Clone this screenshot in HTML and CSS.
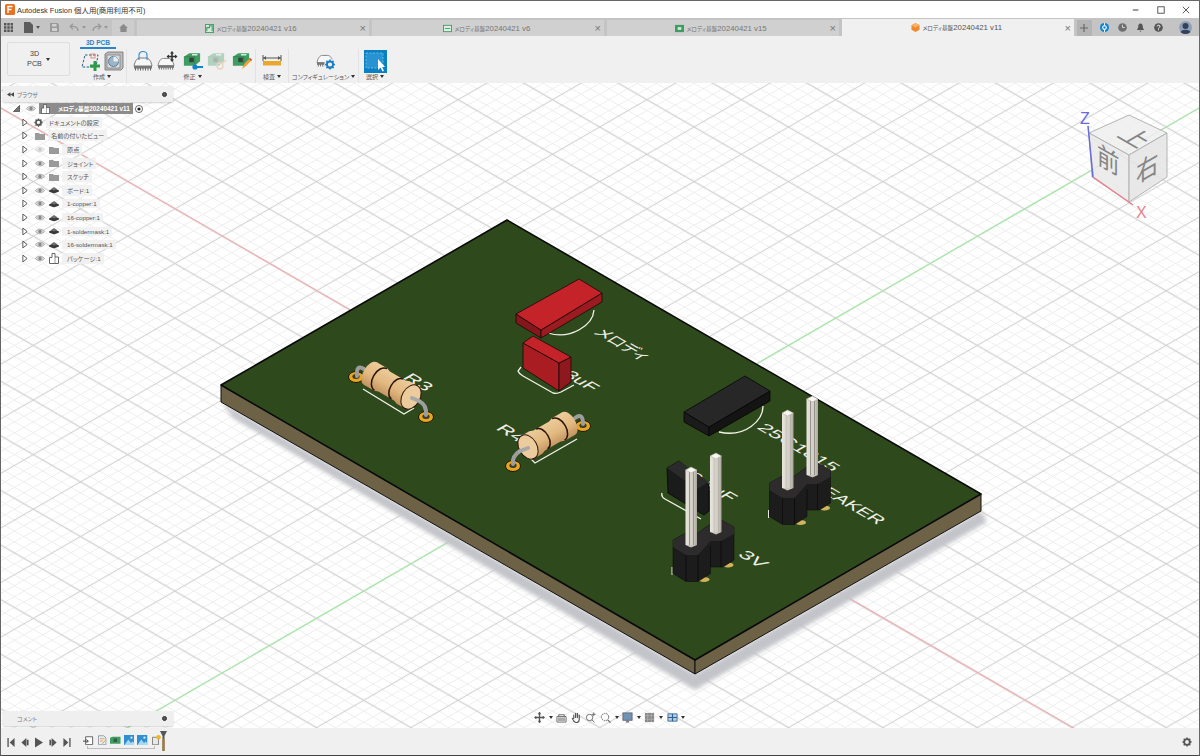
FILE: index.html
```html
<!DOCTYPE html>
<html lang="ja">
<head>
<meta charset="utf-8">
<title>Autodesk Fusion</title>
<link rel="stylesheet" href="styles.css">
</head>
<body>
<svg class="defs" width="0" height="0" aria-hidden="true">
  <defs>
    <symbol id="eye" viewBox="0 0 10 7"><path d="M0.5 3.5C2.5 0.5 7.5 0.5 9.5 3.5C7.5 6.5 2.5 6.5 0.5 3.5Z" fill="#d8d8d8" stroke="#9a9a9a" stroke-width=".8"/><circle cx="5" cy="3.5" r="1.7" fill="#8a8a8a"/></symbol>
    <symbol id="folder" viewBox="0 0 10 8"><path d="M0 1H4L5 2H10V8H0Z" fill="#9a9a9a"/></symbol>
    <symbol id="body" viewBox="0 0 10 7"><path d="M0 4L5 1.500L10 4V5L5 7L0 5Z" fill="#3a3a3a"/><path d="M2 2.500L5 0.500L8 2.500L5 4Z" fill="#707070"/></symbol>
    <symbol id="pack" viewBox="0 0 10 11"><path d="M3 .5H6V4H9.500V10.500H.5V4.500H3Z" fill="#fff" stroke="#555" stroke-width=".9"/><path d="M6 4V10" stroke="#555" stroke-width=".6"/></symbol>
    <symbol id="tri" viewBox="0 0 7 10"><path d="M1 1L6 5L1 9Z" fill="#fff" stroke="#444" stroke-width="1"/></symbol>
    <symbol id="chip" viewBox="0 0 20 18"><path d="M1 13C2 8 4 5 7 5H13C16 5 18 8 19 13Z" fill="#f7f7f7" stroke="#7a7a7a" stroke-width="1"/><rect x="1" y="13" width="18" height="2.500" fill="#777"/><path d="M2.500 15v2.500M5 15v2.500M7.500 15v2.500M10 15v2.500M12.500 15v2.500M15 15v2.500M17.500 15v2.500" stroke="#666" stroke-width="1"/></symbol>
    <symbol id="pcb" viewBox="0 0 20 16"><path d="M1 5L7 1H19V10L13 15H1Z" fill="#3f9d63"/><path d="M1 5H13V15" fill="none" stroke="#2f7a4a" stroke-width=".8"/><rect x="7" y="6" width="5" height="5" fill="#33423a"/><rect x="10" y="2" width="6" height="1.500" fill="#e7f3ea"/></symbol>
    <symbol id="gear" viewBox="0 0 12 12"><circle cx="6" cy="6" r="3.400" fill="none" stroke="currentColor" stroke-width="2.200"/><path d="M6 .5V2.500M6 9.500V11.500M.5 6H2.500M9.500 6H11.500M2.100 2.100L3.500 3.500M8.500 8.500L9.900 9.900M2.100 9.900L3.500 8.500M8.500 3.500L9.900 2.100" stroke="currentColor" stroke-width="1.700"/></symbol>
    <symbol id="doc" viewBox="0 0 12 14"><path d="M1 1H8L11 4V13H1Z" fill="#e8eef4" stroke="#7b8794" stroke-width="1"/></symbol>
    <symbol id="pic" viewBox="0 0 12 12"><rect width="12" height="12" fill="#2f8fd0"/><path d="M0 12L5 5L8 9L10 7L12 10V12Z" fill="#a9d8f4"/><circle cx="8.500" cy="3" r="1.300" fill="#d5eefc"/></symbol>
  </defs>
</svg>

<div class="window">
  <header class="titlebar">
    <svg class="app-icon" viewBox="0 0 10 11"><rect width="10" height="11" rx="1.500" fill="#e8701f"/><path d="M3 9V2.500H7.500M3 5.500H6.500" fill="none" stroke="#fff" stroke-width="1.400"/></svg>
    <span class="app-title">Autodesk Fusion 個人用(商用利用不可)</span>
    <div class="win-controls">
      <svg class="win-btn" viewBox="0 0 10 10"><path d="M1 5H8" stroke="#333" stroke-width="1.200"/></svg>
      <svg class="win-btn" viewBox="0 0 10 10"><rect x="1" y="1" width="8" height="8" fill="none" stroke="#333" stroke-width="1"/></svg>
      <svg class="win-btn" viewBox="0 0 10 10"><path d="M1 1L9 9M9 1L1 9" stroke="#333" stroke-width="1"/></svg>
    </div>
  </header>

  <nav class="tabbar">
    <div class="quick">
      <svg class="q-grid" viewBox="0 0 9 9"><path d="M0 0h2.400v2.400H0zM3.300 0h2.400v2.400H3.300zM6.600 0H9v2.400H6.600zM0 3.300h2.400v2.400H0zM3.300 3.300h2.400v2.400H3.300zM6.600 3.300H9v2.400H6.600zM0 6.600h2.400V9H0zM3.300 6.600h2.400V9H3.300zM6.600 6.600H9V9H6.600z" fill="#555"/></svg>
      <svg class="q-file" viewBox="0 0 9 11"><path d="M0 0H6L9 3V11H0Z" fill="#5c5c5c"/></svg>
      <span class="caret q-c1"></span>
      <svg class="q-save" viewBox="0 0 9 9"><path d="M0 0H7.500L9 1.500V9H0Z" fill="#9a9a9a"/><rect x="2" y="1" width="4.500" height="2.500" fill="#d0d0d0"/><rect x="2" y="5" width="5" height="3" fill="#d0d0d0"/></svg>
      <svg class="q-undo" viewBox="0 0 10 9"><path d="M9 8C9 4 6 3 2 3.500M4 .8L1.200 3.500L4 6.200" fill="none" stroke="#9a9a9a" stroke-width="1.400"/></svg>
      <span class="caret light q-c2"></span>
      <svg class="q-redo" viewBox="0 0 10 9"><path d="M1 8C1 4 4 3 8 3.500M6 .8L8.800 3.500L6 6.200" fill="none" stroke="#9a9a9a" stroke-width="1.400"/></svg>
      <span class="caret light q-c3"></span>
    </div>
    <div class="home-tab"><svg viewBox="0 0 10 9"><path d="M5 0L10 4.500H8.500V9H1.500V4.500H0Z" fill="#8b8b8b"/></svg></div>
    <div class="tab">
      <svg class="tab-icon" viewBox="0 0 10 10"><rect x=".5" y=".5" width="9" height="9" fill="#d5eadb" stroke="#3f9d63"/><path d="M2 8V4H5V2H8V8" fill="none" stroke="#3f9d63" stroke-width="1.200"/></svg>
      <span class="tab-text"><span class="ja">メロディ基盤</span>20240421 v16</span><span class="tab-close">×</span>
    </div>
    <div class="tab second">
      <svg class="tab-icon" viewBox="0 0 10 10"><rect x=".5" y="1.500" width="9" height="7" fill="#dcefe2" stroke="#3f9d63"/><path d="M2 5H8" stroke="#3f9d63"/></svg>
      <span class="tab-text"><span class="ja">メロディ基盤</span>20240421 v6</span><span class="tab-close">×</span>
    </div>
    <div class="tab">
      <svg class="tab-icon" viewBox="0 0 10 10"><rect y="1" width="10" height="8" fill="#3f9d63"/><rect x="3" y="3.500" width="4" height="3" fill="#d5eadb"/></svg>
      <span class="tab-text"><span class="ja">メロディ基盤</span>20240421 v15</span><span class="tab-close">×</span>
    </div>
    <div class="tab active">
      <svg class="tab-icon" viewBox="0 0 10 10"><path d="M5 0L9.500 2.500V7.500L5 10L.5 7.500V2.500Z" fill="#ef8a2c"/><path d="M.5 2.500L5 5L9.500 2.500L5 0Z" fill="#f7b267"/></svg>
      <span class="tab-text"><span class="ja">メロディ基盤</span>20240421 v11</span><span class="tab-close">×</span>
    </div>
    <div class="new-tab"><svg viewBox="0 0 9 9"><path d="M4.500 0V9M0 4.500H9" stroke="#666" stroke-width="1.300"/></svg></div>
    <div class="status-icons">
      <svg class="st" viewBox="0 0 10 10"><circle cx="5" cy="5" r="5" fill="#0c84d0"/><circle cx="5" cy="5" r="2" fill="none" stroke="#fff" stroke-width="1.200"/><path d="M5 0V3M5 7V10" stroke="#fff"/></svg>
      <svg class="st" viewBox="0 0 10 10"><circle cx="5" cy="5" r="4.800" fill="#6f6f6f"/><path d="M5 2V5H7.500" fill="none" stroke="#ddd" stroke-width="1"/></svg>
      <svg class="st" viewBox="0 0 10 10"><path d="M5 .5C3 .5 2.500 2 2.500 4C2.500 6 1.500 7 1 7.800H9C8.500 7 7.500 6 7.500 4C7.500 2 7 .5 5 .5ZM4 8.500H6L5 10Z" fill="#555"/></svg>
      <svg class="st" viewBox="0 0 10 10"><circle cx="5" cy="5" r="4.800" fill="#555"/><path d="M3.500 3.800C3.500 2 6.700 2 6.700 3.800C6.700 5 5 4.900 5 6.200M5 7V8" fill="none" stroke="#fff" stroke-width="1.100"/></svg>
      <svg class="avatar" viewBox="0 0 13 13"><circle cx="6.500" cy="6.500" r="6.500" fill="#8fa0b8"/><circle cx="6.500" cy="5" r="3" fill="#33425c"/><path d="M1.500 11C3 8 10 8 11.500 11C9 13.700 4 13.700 1.500 11Z" fill="#33425c"/></svg>
    </div>
  </nav>

  <section class="toolbar">
    <div class="mode-btn"><span>3D<br>PCB</span><span class="caret dark"></span></div>
    <div class="pcb-tabs">
      <div class="pcb-label">3D PCB</div>
      <div class="groups">
        <div class="group g-create">
          <div class="tools">
            <svg class="tool" viewBox="0 0 20 20"><path d="M4 4H17L15 16H1Z" fill="none" stroke="#2c5d86" stroke-width="1" stroke-dasharray="2.500 1.500"/><rect x="10" y="3" width="4" height="4" fill="none" stroke="#d77a6e" stroke-width=".8"/><path d="M14 10V20M9 15H19" stroke="#2c9a48" stroke-width="3"/></svg>
            <svg class="tool" viewBox="0 0 20 20"><path d="M1 3L4 1H19V17L17 19H1Z" fill="#bdbdbd" stroke="#6d6d6d" stroke-width=".8"/><rect x="3" y="4" width="13" height="13" fill="#d7dde2" stroke="#777" stroke-width=".7"/><circle cx="9.500" cy="10.500" r="5" fill="#9db5c9" stroke="#5f7c93"/><path d="M9.500 10.500V5.500A5 5 0 0 1 14.500 10.500Z" fill="#e8eef2"/></svg>
          </div>
          <div class="group-label">作成<span class="caret dark"></span></div>
        </div>
        <div class="group g-modify">
          <div class="tools">
            <svg class="tool wide" viewBox="0 0 22 20"><use href="#chip" x="0" y="2" width="20" height="18"/><path d="M6 9V4A4 3.500 0 0 1 14 4V9" fill="none" stroke="#3f8fcf" stroke-width="1.200"/></svg>
            <svg class="tool wide" viewBox="0 0 22 20"><use href="#chip" x="0" y="3" width="18" height="16"/><path d="M15 1V10M10.500 5.500H19.500" stroke="#333" stroke-width="1.600"/><path d="M13 2.500L15 0L17 2.500ZM13 8.500L15 11L17 8.500ZM12 3.500L9.500 5.500L12 7.500ZM18 3.500L20.500 5.500L18 7.500Z" fill="#333"/></svg>
            <svg class="tool wide" viewBox="0 0 22 20"><use href="#pcb" x="1" y="1" width="18" height="15"/><circle cx="13" cy="16" r="2.600" fill="#0c84d0"/><path d="M13 16H21" stroke="#0c84d0" stroke-width="2"/></svg>
            <svg class="tool wide faded" viewBox="0 0 22 20"><use href="#pcb" x="1" y="1" width="18" height="15"/><circle cx="14" cy="15" r="3" fill="none" stroke="#e0a06a" stroke-width="1.400"/><path d="M16 13L20 9" stroke="#e0a06a" stroke-width="1.400"/></svg>
            <svg class="tool wide" viewBox="0 0 22 20"><use href="#pcb" x="1" y="1" width="18" height="15"/><path d="M11 18L13 13L19 7L21 9L15 15Z" fill="#f0a030"/><path d="M19 7L21 9L20 10L18 8Z" fill="#d8483c"/></svg>
          </div>
          <div class="group-label">修正<span class="caret dark"></span></div>
        </div>
        <div class="group g-inspect">
          <div class="tools">
            <svg class="tool" viewBox="0 0 20 20"><path d="M1 4V10M19 4V10M1 7H19" stroke="#555" stroke-width="1"/><path d="M4 5L1.500 7L4 9ZM16 5L18.500 7L16 9Z" fill="#555"/><rect x="1" y="10" width="18" height="4.500" fill="#eba72b"/></svg>
          </div>
          <div class="group-label">検査<span class="caret dark"></span></div>
        </div>
        <div class="group g-config">
          <div class="tools">
            <svg class="tool" viewBox="0 0 20 20"><use href="#chip" x="0" y="0" width="18" height="16"/><circle cx="14" cy="13.500" r="5.800" fill="#f0f0f0"/><use href="#gear" x="8.500" y="8" width="11" height="11" class="gear-blue"/></svg>
          </div>
          <div class="group-label">コンフィギュレーション<span class="caret dark"></span></div>
        </div>
        <div class="group g-select">
          <div class="tools">
            <svg class="tool select" viewBox="0 0 23 23"><rect width="23" height="23" fill="#0a80c4"/><rect x="2" y="3" width="17" height="15" fill="#2793d2" stroke="#7cc4ea" stroke-width=".8" stroke-dasharray="2 1.500"/><path d="M14 9V20L16.500 17.500L18.500 21.500L20 20.700L18 17H21Z" fill="#fff"/></svg>
          </div>
          <div class="group-label">選択<span class="caret dark"></span></div>
        </div>
      </div>
    </div>
  </section>

  <main class="viewport">
    <svg class="scene" viewBox="0 83 1198 645" preserveAspectRatio="none">
      <defs>
        <pattern id="grid" patternUnits="userSpaceOnUse" width="100" height="100" patternTransform="matrix(0.472 0.273 -0.472 0.273 268.3 72.4)">
          <path d="M10 0V100M30 0V100M70 0V100M90 0V100M0 10H100M0 30H100M0 70H100M0 90H100" stroke="#eeeeee" stroke-width="1.900" fill="none"/>
          <path d="M50 0V100M0 50H100" stroke="#d2d2d2" stroke-width="2.300" fill="none"/>
        </pattern>
        <filter id="soft" x="-5%" y="-5%" width="110%" height="110%"><feGaussianBlur stdDeviation="2"/></filter>
        <linearGradient id="tan" x1="0" y1="-13" x2="0" y2="13" gradientUnits="userSpaceOnUse">
          <stop offset="0" stop-color="#edcc9c"/><stop offset=".55" stop-color="#e2b981"/><stop offset="1" stop-color="#c2935f"/>
        </linearGradient>
        <linearGradient id="pinface" x1="0" y1="0" x2="1" y2="0">
          <stop offset="0" stop-color="#e9e6df"/><stop offset=".3" stop-color="#dedad2"/><stop offset=".34" stop-color="#8f8c86"/><stop offset=".4" stop-color="#d6d2ca"/><stop offset=".66" stop-color="#d2cec6"/><stop offset=".7" stop-color="#8f8c86"/><stop offset=".76" stop-color="#c8c4bc"/><stop offset="1" stop-color="#a9a59d"/>
        </linearGradient>
        <g id="resistor">
          <path d="M-47 -13H-35L-31 -11.500H-13L-9 -13H0V13H-9L-13 11.500H-31L-35 13H-47Z" fill="url(#tan)"/>
          <ellipse cx="-47" cy="0" rx="7" ry="13" fill="url(#tan)"/>
          <path d="M-35 -12.500A8 12.500 0 0 0 -35 12.500M-16 -11.500A7 11.500 0 0 0 -16 11.500" fill="none" stroke="#2a1408" stroke-width="1.500"/>
          <ellipse cx="0" cy="0" rx="9" ry="13" fill="#eccb9d" stroke="#2a1408" stroke-width="1"/>
        </g>
        <g id="pad">
          <ellipse cx="0" cy="0" rx="7.500" ry="5.500" fill="#e8a61e" stroke="#1a1408" stroke-width="1"/>
          <ellipse cx="0" cy="-.5" rx="3.600" ry="2.500" fill="#3a3a30"/>
        </g>
        <g id="header">
          <path d="M671 567V575" stroke="#e8e8e0" stroke-width="1"/>
          <ellipse cx="703" cy="579.500" rx="5.500" ry="2.500" fill="#d2b45c"/>
          <ellipse cx="727" cy="565" rx="5.500" ry="2.500" fill="#d2b45c"/>
          <path d="M672 540L685 533L697 533L708 525L720 520L733 527V560L722 567H709.500V573.500L697 581.500H685L672 573.500Z" fill="#1d1c1c" stroke="#0e0e0e" stroke-width=".6"/>
          <path d="M672 540L685 533L697 533L708 525L720 520L733 527V534L720 541L709.500 541L697 555H685L672 547Z" fill="#2d2b2b"/>
          <path d="M685 555V581M697 555V581M709.500 546V567M720 541V567" stroke="#0a0a0a" stroke-width=".8"/>
          <rect x="684.500" y="470" width="11.500" height="75" fill="url(#pinface)"/>
          <path d="M684.500 545L690 547.500L696 545Z" fill="#c8c4bc"/>
          <path d="M684.500 470L690 467L696 470L690 473Z" fill="#f7f5f0" stroke="#a8a49c" stroke-width=".5"/>
          <rect x="709" y="456" width="11.500" height="76" fill="url(#pinface)"/>
          <path d="M709 532L715 534.500L720.500 532Z" fill="#c8c4bc"/>
          <path d="M709 456L715 453L720.500 456L715 459Z" fill="#f7f5f0" stroke="#a8a49c" stroke-width=".5"/>
        </g>
      </defs>

      <rect x="0" y="83" width="1198" height="645" fill="#ffffff"/>
      <rect x="0" y="83" width="1198" height="645" fill="url(#grid)"/>
      <path d="M0 108L1200 801.500" stroke="#f0b0b4" stroke-width="1.200"/>
      <path d="M0 800.800L1385 0" stroke="#a6e8a6" stroke-width="1.200"/>

      <path class="shadow" d="M220 402L232 418L694 690L986 522L980 511L694 674Z" fill="#c3c4c9" filter="url(#soft)"/>

      <path d="M220 385L694 660V674L220 402Z" fill="#6d6146" stroke="#111" stroke-width="1"/>
      <path d="M694 660L980 494V511L694 674Z" fill="#6d6146" stroke="#111" stroke-width="1"/>
      <path d="M220 385L506 220L980 494L694 660Z" fill="#2e4a1d" stroke="#0a0a0a" stroke-width="1.600" stroke-linejoin="round"/>

      <g class="silk" fill="none" stroke="#f2f2ea" stroke-width="1.300">
        <path d="M593 310C592 325 570 340 547 333"/>
        <path d="M520 367L517 371Q518 374 522 376L552 393Q556 394 560 392L573 385"/>
        <path d="M362 389L403 414L413 408"/>
        <path d="M523 452L534 463L576 439"/>
        <path d="M762 406C762 420 745 438 718 432"/>
        <path d="M661 493Q660 497 664 499L700 519"/>
      </g>
      <g class="silk-text">
        <text class="silk-t" transform="matrix(.866 .5 -.866 .5 592 333)" textLength="56" lengthAdjust="spacingAndGlyphs">メロディ</text>
        <text class="silk-t" transform="matrix(.866 .5 -.866 .5 401 378)" textLength="27" lengthAdjust="spacingAndGlyphs">R3</text>
        <text class="silk-t" transform="matrix(.866 .5 -.866 .5 494 429)" textLength="27" lengthAdjust="spacingAndGlyphs">R4</text>
        <text class="silk-t" transform="matrix(.866 .5 -.866 .5 547 367)" textLength="50" lengthAdjust="spacingAndGlyphs">3.3uF</text>
        <text class="silk-t" transform="matrix(.866 .5 -.866 .5 755 428)" textLength="88" lengthAdjust="spacingAndGlyphs">25C1815</text>
        <text class="silk-t" transform="matrix(.866 .5 -.866 .5 685 477)" textLength="50" lengthAdjust="spacingAndGlyphs">0.1uF</text>
        <text class="silk-t" transform="matrix(.866 .5 -.866 .5 797 479)" textLength="92" lengthAdjust="spacingAndGlyphs">SPEAKER</text>
        <text class="silk-t" transform="matrix(.866 .5 -.866 .5 736 555)" textLength="27" lengthAdjust="spacingAndGlyphs">3V</text>
      </g>

      <g class="part-red">
        <path d="M515 314L540 330V338L515 323Z" fill="#84171c" stroke="#1a0606" stroke-width=".8"/>
        <path d="M540 330L601 293V302L540 338Z" fill="#9c1b20" stroke="#1a0606" stroke-width=".8"/>
        <path d="M515 314L578 279L601 293L540 330Z" fill="#c4232a" stroke="#1a0606" stroke-width=".8"/>
        <path d="M522 343L558 363V391L522 368Z" fill="#a81c22" stroke="#1a0606" stroke-width=".8"/>
        <path d="M558 363L570 357V382L558 391Z" fill="#8d181d" stroke="#1a0606" stroke-width=".8"/>
        <path d="M522 343L532 336L570 357L558 363Z" fill="#c4232a" stroke="#1a0606" stroke-width=".8"/>
      </g>

      <g class="part-black">
        <path d="M683 412L708 427V436L683 422Z" fill="#1b1b1b" stroke="#050505" stroke-width=".8"/>
        <path d="M708 427L769 391V401L708 436Z" fill="#141414" stroke="#050505" stroke-width=".8"/>
        <path d="M683 412L744 376L769 391L708 427Z" fill="#272727" stroke="#050505" stroke-width=".8"/>
        <path d="M666 468L667 493L703 515L708 511V485L678 461Z" fill="#1b1b1b" stroke="#050505" stroke-width=".8"/>
        <path d="M666 468L678 461L708 482L696 489Z" fill="#2b2b2b"/>
      </g>

      <use href="#pad" x="355" y="377"/>
      <use href="#pad" x="425" y="417"/>
      <use href="#pad" x="512" y="466"/>
      <use href="#pad" x="582" y="426"/>
      <g class="leads" fill="none" stroke="#9d9d9d" stroke-width="4" stroke-linecap="round">
        <path d="M363 369Q355 364 356 376"/>
        <path d="M411 398L418 401Q426 405 425 415"/>
        <path d="M574 418Q582 412 582 424"/>
        <path d="M527 448L519 451Q511 456 512 464"/>
      </g>
      <use href="#resistor" transform="translate(410 397) rotate(30)"/>
      <use href="#resistor" transform="translate(527 447) scale(-1 1) rotate(30)"/>
      <path class="leads" d="M411 398L418 401" stroke="#a8a8a8" stroke-width="4" stroke-linecap="round"/>
      <path class="leads" d="M527 448L519 451" stroke="#a8a8a8" stroke-width="4" stroke-linecap="round"/>

      <use href="#header"/>
      <use href="#header" x="96.500" y="-57"/>

      <g class="gizmo">
        <path d="M1088 133L1128 115L1166 133L1128 155Z" fill="#efefef" fill-opacity=".85" stroke="#b4b4b4"/>
        <path d="M1088 133L1128 155V202L1091 177Z" fill="#e9e9e9" fill-opacity=".85" stroke="#b4b4b4"/>
        <path d="M1128 155L1166 133V177L1128 202Z" fill="#e4e4e4" fill-opacity=".85" stroke="#b4b4b4"/>
        <text class="cube-t" transform="matrix(.866 .5 -.866 .5 1115 136)">上</text>
        <text class="cube-t" transform="matrix(.866 .5 0 1 1096 163)">前</text>
        <text class="cube-t" transform="matrix(.866 -.5 0 1 1135 184)">右</text>
        <path d="M1087 126L1092 177" stroke="#6a6ae0" stroke-width="1.500"/>
        <path d="M1092 177L1132 205" stroke="#e87f8c" stroke-width="1.500"/>
        <text class="axis-z" x="1079" y="124">Z</text>
        <text class="axis-x" x="1135" y="218">X</text>
      </g>
    </svg>

    <div class="panel browser">
      <svg class="collapse" viewBox="0 0 8 5"><path d="M4 0V5L0 2.500ZM8 0V5L4 2.500Z" fill="#444"/></svg>
      <span class="panel-title">ブラウザ</span>
      <span class="panel-dot"></span>
    </div>

    <div class="tree">
      <div class="row root">
        <svg class="open-tri" viewBox="0 0 8 8"><path d="M7.500 .5V7.500H.5Z" fill="#777" stroke="#333" stroke-width=".8"/></svg>
        <svg class="eye" viewBox="0 0 10 7"><use href="#eye"/></svg>
        <div class="root-label"><svg class="ico" viewBox="0 0 10 11"><use href="#pack"/></svg><span><span class="ja">メロディ基盤</span>20240421 v11</span></div>
        <svg class="radio" viewBox="0 0 9 9"><circle cx="4.500" cy="4.500" r="4" fill="#fff" stroke="#333" stroke-width=".8"/><circle cx="4.500" cy="4.500" r="1.800" fill="#222"/></svg>
      </div>
      <div class="row doc"><svg class="tri" viewBox="0 0 7 10"><use href="#tri"/></svg><svg class="gear-ico" viewBox="0 0 12 12"><use href="#gear"/></svg><span class="label">ドキュメントの設定</span></div>
      <div class="row views"><svg class="tri" viewBox="0 0 7 10"><use href="#tri"/></svg><svg class="ico" viewBox="0 0 10 8"><use href="#folder"/></svg><span class="label">名前の付いたビュー</span></div>
      <div class="row item"><svg class="tri" viewBox="0 0 7 10"><use href="#tri"/></svg><svg class="eye off" viewBox="0 0 10 7"><use href="#eye"/></svg><svg class="ico" viewBox="0 0 10 8"><use href="#folder"/></svg><span class="label">原点</span></div>
      <div class="row item"><svg class="tri" viewBox="0 0 7 10"><use href="#tri"/></svg><svg class="eye" viewBox="0 0 10 7"><use href="#eye"/></svg><svg class="ico" viewBox="0 0 10 8"><use href="#folder"/></svg><span class="label">ジョイント</span></div>
      <div class="row item"><svg class="tri" viewBox="0 0 7 10"><use href="#tri"/></svg><svg class="eye" viewBox="0 0 10 7"><use href="#eye"/></svg><svg class="ico" viewBox="0 0 10 8"><use href="#folder"/></svg><span class="label">スケッチ</span></div>
      <div class="row item"><svg class="tri" viewBox="0 0 7 10"><use href="#tri"/></svg><svg class="eye" viewBox="0 0 10 7"><use href="#eye"/></svg><svg class="ico" viewBox="0 0 10 7"><use href="#body"/></svg><span class="label">ボード:1</span></div>
      <div class="row item"><svg class="tri" viewBox="0 0 7 10"><use href="#tri"/></svg><svg class="eye" viewBox="0 0 10 7"><use href="#eye"/></svg><svg class="ico" viewBox="0 0 10 7"><use href="#body"/></svg><span class="label">1-copper:1</span></div>
      <div class="row item"><svg class="tri" viewBox="0 0 7 10"><use href="#tri"/></svg><svg class="eye" viewBox="0 0 10 7"><use href="#eye"/></svg><svg class="ico" viewBox="0 0 10 7"><use href="#body"/></svg><span class="label">16-copper:1</span></div>
      <div class="row item"><svg class="tri" viewBox="0 0 7 10"><use href="#tri"/></svg><svg class="eye" viewBox="0 0 10 7"><use href="#eye"/></svg><svg class="ico" viewBox="0 0 10 7"><use href="#body"/></svg><span class="label">1-soldermask:1</span></div>
      <div class="row item"><svg class="tri" viewBox="0 0 7 10"><use href="#tri"/></svg><svg class="eye" viewBox="0 0 10 7"><use href="#eye"/></svg><svg class="ico" viewBox="0 0 10 7"><use href="#body"/></svg><span class="label">16-soldermask:1</span></div>
      <div class="row item"><svg class="tri" viewBox="0 0 7 10"><use href="#tri"/></svg><svg class="eye" viewBox="0 0 10 7"><use href="#eye"/></svg><svg class="ico tall" viewBox="0 0 10 11"><use href="#pack"/></svg><span class="label">パッケージ:1</span></div>
    </div>

    <div class="panel comments">
      <span class="panel-title">コメント</span>
      <span class="panel-dot"></span>
    </div>

    <div class="navbar">
      <svg class="nav" viewBox="0 0 12 12"><path d="M6 0V12M1 6H11" stroke="#555" stroke-width="1.400"/><path d="M4 2.500L6 0L8 2.500ZM0 6L2.500 4V8ZM12 6L9.500 4V8ZM4 9.500L6 12L8 9.500Z" fill="#555"/></svg><span class="caret dark"></span>
      <svg class="nav" viewBox="0 0 12 12"><path d="M1 5H11V11H1ZM3 5V3H9V5" fill="none" stroke="#666"/><rect x="2" y="6" width="8" height="4" fill="#aaa"/></svg>
      <svg class="nav" viewBox="0 0 12 12"><path d="M3 7V3.500M5 6V1.500M7 6V1.500M9 6V3V8C9 10 8 11.500 6 11.500C4 11.500 3 10.500 1.500 7" fill="none" stroke="#555" stroke-width="1.300" stroke-linecap="round"/></svg>
      <svg class="nav" viewBox="0 0 12 12"><circle cx="5" cy="6" r="3.500" fill="none" stroke="#666" stroke-width="1"/><path d="M7.500 8.500L10.500 11.500M9.500 .5V4.500M7.500 2.500H11.500" stroke="#666" stroke-width="1"/></svg>
      <svg class="nav" viewBox="0 0 12 12"><circle cx="5.500" cy="5.500" r="4" fill="none" stroke="#666" stroke-width="1" stroke-dasharray="2 .8"/><path d="M8.500 8.500L11.500 11.500" stroke="#666" stroke-width="1.200"/></svg><span class="caret dark"></span>
      <svg class="nav" viewBox="0 0 12 12"><rect x="1" y="1" width="10" height="8" fill="#6f93b4" stroke="#667"/><path d="M4 11.500H8L7 9H5Z" fill="#777"/></svg><span class="caret dark"></span>
      <svg class="nav" viewBox="0 0 12 12"><path d="M1 1H11V11H1Z" fill="#8a8a8a"/><path d="M4 1V11M8 1V11M1 4H11M1 8H11" stroke="#bbb" stroke-width=".6"/></svg><span class="caret dark"></span>
      <svg class="nav" viewBox="0 0 12 12"><path d="M1 2H11V10H1Z" fill="#b8cde0" stroke="#3f6f9c"/><path d="M6 2V10M1 6H11" stroke="#2f6398" stroke-width="1.300"/></svg><span class="caret dark"></span>
    </div>
  </main>

  <footer class="timeline">
    <div class="player">
      <svg class="pl" viewBox="0 0 8 10"><path d="M0 0H1.500V10H0ZM8 0V10L2.500 5Z" fill="#555"/></svg>
      <svg class="pl" viewBox="0 0 8 10"><path d="M6 2V8H8V2ZM5.500 0V10L0 5Z" fill="#555"/></svg>
      <svg class="pl big" viewBox="0 0 8 10"><path d="M0 0V10L8 5Z" fill="#555"/></svg>
      <svg class="pl" viewBox="0 0 8 10"><path d="M0 2V8H2V2ZM2.500 0V10L8 5Z" fill="#555"/></svg>
      <svg class="pl" viewBox="0 0 8 10"><path d="M0 0V10L5.500 5ZM6.500 0H8V10H6.500Z" fill="#555"/></svg>
    </div>
    <div class="features">
      <div class="feat-row">
        <svg class="feat" viewBox="0 0 12 12"><path d="M3 2H11V11H3Z" fill="#fff" stroke="#555"/><path d="M0 7H6M4 5L6 7L4 9" fill="none" stroke="#333"/></svg>
        <svg class="feat" viewBox="0 0 12 14"><use href="#doc"/><path d="M3 5H9M3 8H7M6 12L10 7" stroke="#d58a3a" stroke-width="1"/></svg>
        <svg class="feat" viewBox="0 0 12 12"><path d="M0 3L3 2H12V10H0Z" fill="#3f9d63"/><rect x="4" y="4" width="4" height="4" fill="#2f5f42"/></svg>
        <svg class="feat" viewBox="0 0 12 12"><use href="#pic"/></svg>
        <svg class="feat" viewBox="0 0 12 12"><use href="#pic"/></svg>
        <svg class="feat" viewBox="0 0 12 14"><path d="M1 3H9V13H1Z" fill="#e8e8e8" stroke="#666"/><circle cx="9" cy="3" r="3" fill="#f0b429"/></svg>
      </div>
      <div class="feat-line"></div>
      <svg class="marker" viewBox="0 0 7 20"><path d="M0 0H7L4.500 5V20H2.500V5Z" fill="#555"/><rect x="2.500" y="8" width="2" height="12" fill="#a77a2a"/></svg>
    </div>
    <svg class="timeline-gear" viewBox="0 0 12 12"><use href="#gear"/></svg>
  </footer>
</div>
</body>
</html>
```

FILE: styles.css
```css
* { box-sizing: border-box; }
html, body { margin: 0; padding: 0; }
body {
  width: 1200px;
  height: 756px;
  overflow: hidden;
  font-family: "Liberation Sans", "Noto Sans CJK JP", sans-serif;
  font-feature-settings: "palt";
  color: #555;
}
.defs { position: absolute; }
.ja { font-size: 5.6px; }

.window {
  display: flex;
  flex-direction: column;
  width: 1200px;
  height: 756px;
  border: 1px solid #666;
  border-bottom-color: #444;
  background: #f0f0f0;
}

/* Title bar */
.titlebar {
  display: flex;
  align-items: center;
  flex: 0 0 17px;
  background: #fff;
  padding-left: 4px;
}
.app-icon { width: 10px; height: 11px; }
.app-title { margin-left: 2px; font-size: 7.4px; color: #333; white-space: nowrap; }
.win-controls { display: flex; margin-left: auto; margin-right: 9px; gap: 17px; }
.win-btn { width: 8px; height: 8px; }

/* Tab bar */
.tabbar {
  display: flex;
  flex: 0 0 18px;
  background: #c4c4c4;
  align-items: flex-end;
}
.quick { display: flex; align-items: center; width: 111px; height: 18px; padding-left: 3px; }
.q-grid { width: 9px; height: 9px; }
.q-file { width: 9px; height: 11px; margin-left: 11px; }
.q-c1 { margin-left: 3px; }
.q-save { width: 9px; height: 9px; margin-left: 10px; }
.q-undo { width: 10px; height: 9px; margin-left: 10px; }
.q-c2 { margin-left: 3px; }
.q-redo { width: 10px; height: 9px; margin-left: 6px; }
.q-c3 { margin-left: 2px; }

.caret {
  display: inline-block;
  width: 0;
  height: 0;
  border-left: 2.5px solid transparent;
  border-right: 2.5px solid transparent;
  border-top: 3px solid #555;
}
.caret.light { border-top-color: #999; }
.caret.dark { border-top-color: #333; margin-left: 2px; vertical-align: 1px; }

.home-tab {
  display: flex;
  align-items: center;
  justify-content: center;
  width: 22px;
  height: 16px;
  background: #cdcdcd;
}
.home-tab svg { width: 9px; height: 8px; }
.tab {
  display: flex;
  align-items: center;
  width: 232.5px;
  height: 16px;
  margin-left: 2.5px;
  padding-left: 68px;
  background: #d0d0d0;
  color: #777;
  font-size: 7.8px;
  white-space: nowrap;
}
.tab.second { padding-left: 71px; }
.tab-icon { width: 9px; height: 9px; margin-right: 3px; flex: none; }
.tab-text { flex: none; }
.tab-close { margin-left: auto; margin-right: 3px; font-size: 11px; color: #777; }
.tab.active { height: 17px; background: #f0f0f0; color: #555; padding-left: 69px; }
.new-tab {
  display: flex;
  align-items: center;
  justify-content: center;
  width: 15px;
  height: 16px;
  margin-left: 2.5px;
  background: #b4b4b4;
}
.new-tab svg { width: 8px; height: 8px; }
.status-icons { display: flex; align-items: center; height: 18px; margin-left: 8px; }
.st { width: 9px; height: 9px; margin-right: 9.3px; }
.avatar { width: 13px; height: 13px; margin-left: 6px; }

/* Toolbar */
.toolbar {
  display: flex;
  flex: 0 0 47px;
  padding-left: 6px;
  background: #f0f0f0;
}
.mode-btn {
  display: flex;
  align-items: center;
  justify-content: center;
  width: 63px;
  height: 34px;
  margin-top: 6px;
  border: 1px solid #dedede;
  border-radius: 2px;
  font-size: 7.2px;
  line-height: 10px;
  color: #444;
  text-align: center;
}
.mode-btn .caret { margin-left: 4px; }
.pcb-tabs { display: flex; flex-direction: column; margin-left: 8px; }
.pcb-label {
  width: 36px;
  height: 13px;
  margin-left: 2px;
  padding-top: 3px;
  font-size: 6.6px;
  font-weight: 700;
  line-height: 8px;
  text-align: center;
  color: #2a86c8;
  border-bottom: 2px solid #2a86c8;
}
.groups { display: flex; height: 34px; }
.group {
  display: flex;
  flex-direction: column;
  align-items: center;
  justify-content: space-between;
  padding: 1px 0 1px;
  border-right: 1px solid #e2e2e2;
}
.g-create { width: 49px; }
.g-modify { width: 129px; padding-left: 3px; }
.g-inspect { width: 33px; }
.g-config { width: 70px; }
.g-config .tools { padding-left: 5px; }
.g-select { width: 32px; border-right: 0; }
.tools { display: flex; gap: 3px; align-items: center; height: 22px; }
.g-modify .tools { gap: 2.5px; }
.tool { width: 20px; height: 20px; display: block; }
.tool.wide { width: 22px; height: 20px; }
.tool.select { width: 23px; height: 23px; }
.faded { opacity: .35; }
.gear-blue { color: #1a7fc4; }
.group-label {
  font-size: 6px;
  line-height: 9px;
  color: #555;
  white-space: nowrap;
}

/* Viewport */
.viewport { position: relative; flex: 1 1 auto; min-height: 0; overflow: hidden; background: #fff; }
.scene { position: absolute; left: 0; top: 0; width: 1198px; height: 645px; }
.silk-t {
  font-family: "Liberation Sans", "Noto Sans CJK JP", sans-serif;
  font-size: 16px;
  fill: #f0f0e8;
}
.cube-t {
  font-family: "Noto Sans CJK JP", sans-serif;
  font-size: 26px;
  font-weight: 400;
  fill: #858585;
}
.axis-z, .axis-x { font-family: "Liberation Sans", sans-serif; font-size: 16px; }
.axis-z { fill: #6a6ae0; }
.axis-x { fill: #e87f8c; }

.panel {
  position: absolute;
  display: flex;
  align-items: center;
  left: 2px;
  width: 170px;
  background: #efefef;
  box-shadow: 0 1px 2px rgba(0, 0, 0, .18);
  border-radius: 1px;
}
.browser { top: 3px; height: 16px; padding-left: 4px; }
.comments { bottom: 2px; height: 15px; padding-left: 14px; }
.collapse { width: 7px; height: 5px; margin-right: 3px; }
.panel-title { font-size: 5.8px; color: #777; }
.panel-dot {
  width: 5px;
  height: 5px;
  margin-left: auto;
  margin-right: 6px;
  border-radius: 50%;
  background: #555;
  border: 1.5px solid #333;
}

.tree {
  position: absolute;
  left: 0;
  top: 19px;
  display: flex;
  flex-direction: column;
  font-size: 6.2px;
  color: #555;
}
.row { display: flex; align-items: center; height: 13.6px; white-space: nowrap; }
.row .tri { width: 6px; height: 9px; margin-left: 21px; flex: none; }
.row .eye { width: 10px; height: 7px; margin-left: 7px; flex: none; }
.row .eye.off { opacity: .45; }
.row .ico { width: 10px; height: 8px; margin-left: 4px; flex: none; }
.row .ico.tall { height: 11px; }
.row .label { margin-left: 3px; padding: 1px 3px; background: rgba(240, 240, 240, .85); }
.row.item .label { margin-left: 3px; padding-left: 5px; }
.root { padding-left: 12px; }
.open-tri { width: 7px; height: 7px; flex: none; }
.root .eye { margin-left: 6px; }
.root-label {
  display: flex;
  align-items: center;
  width: 94px;
  height: 11px;
  margin-left: 3px;
  padding-left: 2px;
  background: #8c8c8c;
  color: #fff;
  font-weight: 700;
  font-size: 6.4px;
}
.row .root-label .ico { width: 9px; height: 10px; margin-left: 0; margin-right: 8px; }
.radio { width: 8px; height: 8px; margin-left: 2px; }
.gear-ico { width: 9px; height: 9px; margin-left: 6px; color: #555; flex: none; }
.doc .label { margin-left: 3px; }
.row.views .ico { margin-left: 7px; }
.row.views .label { margin-left: 3px; }

.navbar {
  position: absolute;
  left: 533px;
  bottom: 5px;
  display: flex;
  align-items: center;
  gap: 3.6px;
}
.nav { width: 11px; height: 11px; }
.navbar .caret { margin-left: 0; vertical-align: baseline; }

/* Timeline */
.timeline {
  display: flex;
  flex: 0 0 27px;
  align-items: center;
  padding: 0 7px 0 6px;
  background: #f0f0f0;
}
.player { display: flex; align-items: center; gap: 6px; padding-top: 1px; }
.pl { width: 8px; height: 9px; }
.pl.big { height: 11px; width: 8px; }
.features { position: relative; margin-left: 12px; width: 87px; padding-top: 1px; }
.feat-row { display: flex; gap: 3px; align-items: center; }
.feat { width: 10.5px; height: 10.5px; }
.feat-line {
  width: 68px;
  height: 3px;
  margin: 1px 0 0 4px;
  border: 1px solid #bdbdbd;
  border-top: 0;
}
.marker { position: absolute; left: 77px; top: -3px; width: 7px; height: 20px; }
.timeline-gear { width: 10px; height: 10px; margin-left: auto; color: #555; }
```
